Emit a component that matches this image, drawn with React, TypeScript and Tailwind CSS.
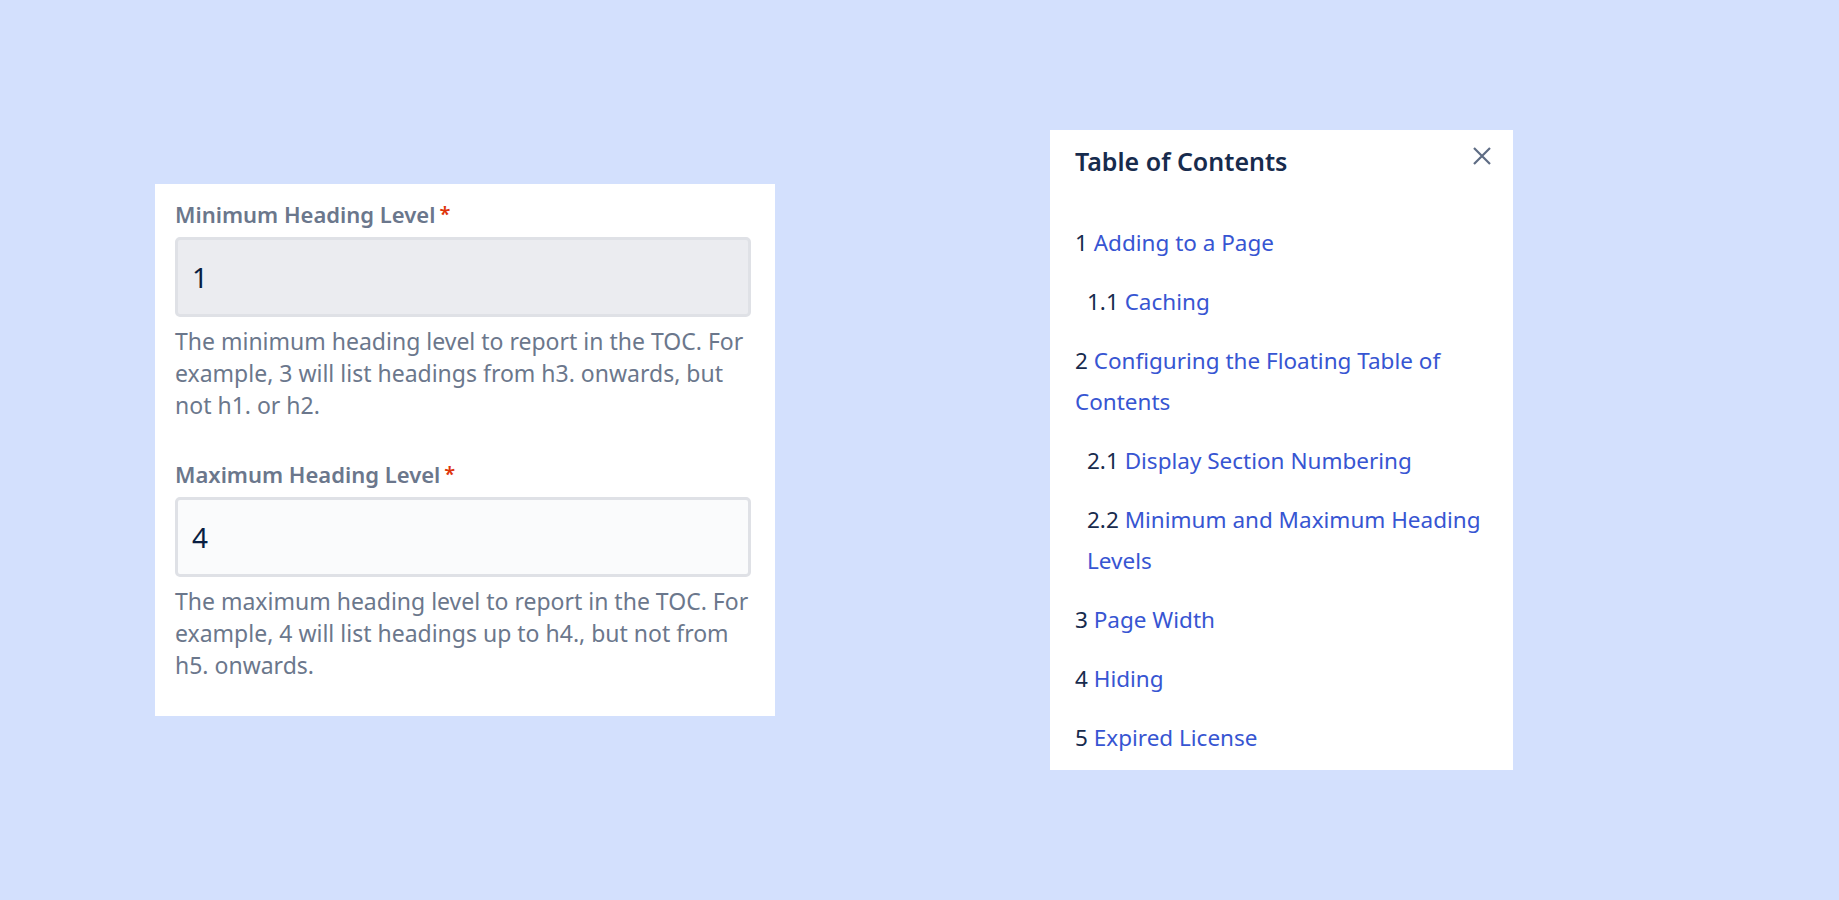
import React from 'react';

interface FieldProps {
    label: string;
    value: string;
    inputClass: string;
    help: string[];
}

const Field: React.FC<FieldProps> = ({ label, value, inputClass, help }) => {
    return (
        <div>
            <label className="flex items-start text-[22px] leading-[32px] font-semibold text-[#6b778c]">
                {label}
                <span className="ml-[4px] mt-[6px] text-[20px] leading-none text-[#de350b]">*</span>
            </label>
            <div
                className={`mt-[7px] h-[80px] rounded-[5px] border-[3px] border-[#dfe1e6] flex items-center px-[14px] text-[28px] text-[#091e42] ${inputClass}`}
            >
                {value}
            </div>
            <p className="mt-[8px] text-[23px] leading-[32px] text-[#6b778c]">
                {help.map((line, i) => (
                    <span key={i} className="block whitespace-nowrap">
                        {line}
                    </span>
                ))}
            </p>
        </div>
    );
};

interface TocItem {
    num: string;
    title: string;
    level: number;
}

const toc: TocItem[] = [
    { num: '1', title: 'Adding to a Page', level: 1 },
    { num: '1.1', title: 'Caching', level: 2 },
    { num: '2', title: 'Configuring the Floating Table of Contents', level: 1 },
    { num: '2.1', title: 'Display Section Numbering', level: 2 },
    { num: '2.2', title: 'Minimum and Maximum Heading Levels', level: 2 },
    { num: '3', title: 'Page Width', level: 1 },
    { num: '4', title: 'Hiding', level: 1 },
    { num: '5', title: 'Expired License', level: 1 },
];

export default function App() {
    return (
        <div className="h-[900px] w-full bg-[#d3e0fd] flex items-center pl-[155px] gap-[275px] font-['Noto_Sans',sans-serif]">
            {/* Settings form */}
            <div className="w-[620px] bg-white pl-[20px] pr-[24px] pt-[14px] pb-[35px]">
                <Field
                    label="Minimum Heading Level"
                    value="1"
                    inputClass="bg-[#ebecf0]"
                    help={[
                        'The minimum heading level to report in the TOC. For',
                        'example, 3 will list headings from h3. onwards, but',
                        'not h1. or h2.',
                    ]}
                />
                <div className="mt-[37px]">
                    <Field
                        label="Maximum Heading Level"
                        value="4"
                        inputClass="bg-[#fafbfc]"
                        help={[
                            'The maximum heading level to report in the TOC. For',
                            'example, 4 will list headings up to h4., but not from',
                            'h5. onwards.',
                        ]}
                    />
                </div>
            </div>

            {/* Floating table of contents */}
            <div className="w-[463px] bg-white pl-[25px] pr-[25px] pt-[15px] pb-[12px]">
                <div className="flex items-start justify-between">
                    <h3 className="text-[25px] leading-[32px] font-semibold text-[#172b4d]">Table of Contents</h3>
                    <button className="mt-[2px] -mr-[3px] text-[#5e6c84]" aria-label="Close">
                        <svg width="18" height="18" viewBox="0 0 18 18" fill="none" stroke="currentColor" strokeWidth="2.2">
                            <path d="M1 1L17 17M17 1L1 17" />
                        </svg>
                    </button>
                </div>
                <ul className="mt-[45px] flex flex-col gap-[18px]">
                    {toc.map((item) => (
                        <li
                            key={item.num}
                            className={`text-[22.5px] leading-[41px] text-[#172b4d] ${item.level === 2 ? 'pl-[12px]' : ''}`}
                        >
                            {item.num} <a className="text-[#3755d2]">{item.title}</a>
                        </li>
                    ))}
                </ul>
            </div>
        </div>
    );
}
